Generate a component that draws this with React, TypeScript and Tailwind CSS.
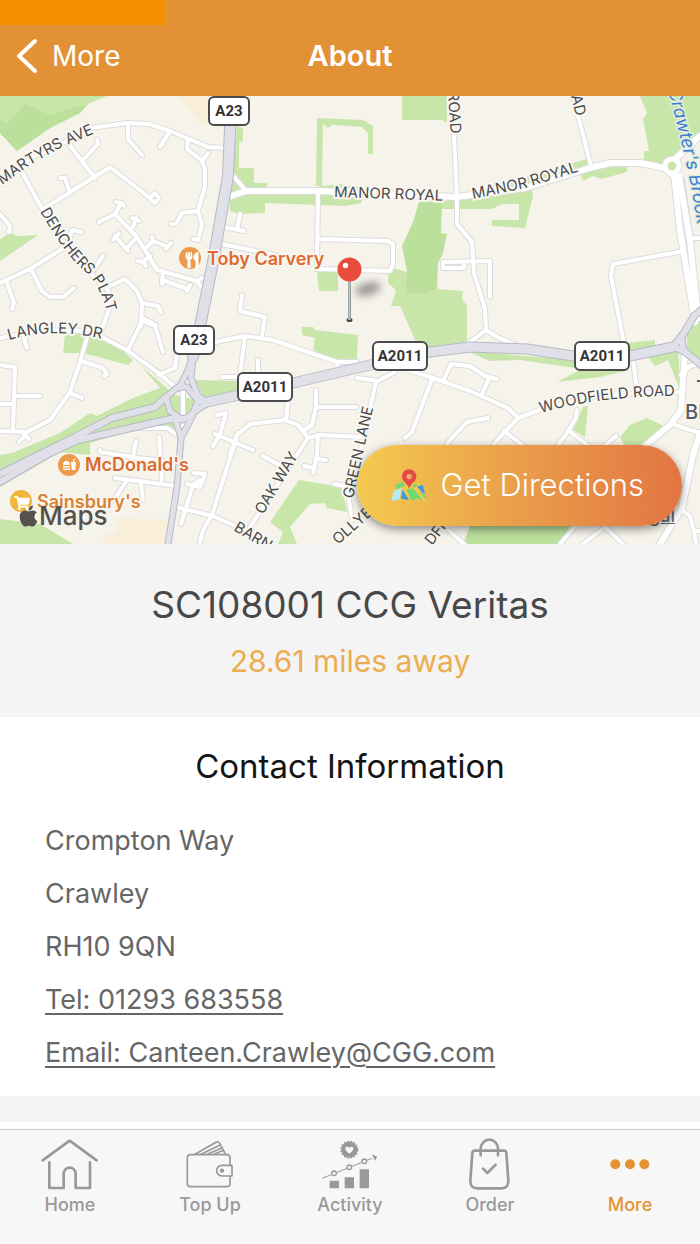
import type { ReactNode } from 'react';
import clsx from 'clsx';
import { FaApple, FaShoppingCart, FaUtensils } from 'react-icons/fa';

const GREEN_AREAS = [
  'M0 96 L107 96 L88 104 L80 113 L50 128 L17 151 L0 133Z',
  'M0 261 L38 235 L17 236 L10 232 L0 240Z',
  'M237 126 L243 128 L243 141 L239 143 L239 168 L254 168 L254 183 L267 183 L267 191 L317 190 L320 186 L340 184 L361 187 L363 198 L361 203 L346 206 L265 203 L265 213 L240 214 L230 211 L230 176Z',
  'M317 118 L363 120 L373 126 L373 154 L368 154 L368 133 L362 127 L332 125 L328 128 L323 124 L322 186 L316 186Z',
  'M402 96H447V123L442 120H402Z',
  'M388 283 L388 274 L393 268 L407 272 L405 294 L437 289 L463 291 L462 299 L467 306 V342 L428 347 L416 342 L400 306 L391 306 L396 290Z',
  'M317 272H338V291H319Z',
  'M640 96H700V135L668 163L644 163V151L649 151L643 119L647 113Z',
  'M442 201 L472 198 L512 181 L587 159 L590 163 L627 164 L627 172 L602 179 L593 176 L583 181 L580 174 L532 189 L533 196 L525 228 L492 226 L492 220 L519 220 L519 204 L502 204 L492 209 L442 209Z',
  'M65 335 L80 333 L110 340 L133 360 L128 365 L83 353 L63 353Z',
  'M0 455 L12 453 L60 433 L90 413 L97 416 L133 398 L160 388 L140 365 L175 395 L197 400 L180 430 L177 428 L133 430 L90 443 L90 455 L60 452 L0 487Z',
  'M195 380 L240 381 V391 L205 400Z',
  'M0 519 L40 524 L73 544 H0Z',
  'M302 327 L313 327 L315 330 L358 335 L357 360 L340 362 L313 350 L315 338 L302 335Z',
  'M299 480 L342 487 L347 512 L327 508 L325 503 L310 504 L290 527 L297 544 H278 L283 532 L270 522Z',
  'M467 351 L575 360 V368 L520 360 L490 361Z',
  'M557 382 L578 371 L632 358 L626 371 L600 377Z',
  'M628 343 L655 340 L655 346 L630 354Z',
  'M647 356 L678 350 L681 392 L668 360 L655 366Z',
  'M583 407 L588 406 L585 437 L573 430Z',
  'M620 437 L630 425 L647 418 L668 428 L648 447 H625Z',
  'M686 332 L700 314 V362 L688 350Z',
];

const DARK_GREEN_AREAS = [
  'M419 202 L442 201 L441 233 L447 234 L443 253 L438 263 L437 289 L425 293 L405 294 L407 272 L402 246 L413 222Z',
  'M0 133 V120 L7 124 L25 104 L50 115 L78 106 L88 104 L80 113 L50 128 L17 151Z',
  'M470 526 H570 L560 544 H463Z',
];

const BEIGE_AREAS = ['M117 518 L167 520 L165 544 H103 L106 533 H117Z', 'M178 96H210V126L200 122Z'];

const STREETS = [
  // north-west estate
  'M0 184 L30 158 L60 145 L90 128 L128 123 L148 124 L170 131 L208 147 L226 148',
  'M128 123 V139 L142 155 M170 131 L160 147',
  'M188 139 L187 149 L202 161 L205 169 V186 L198 211 L202 224 L198 240 L193 239 M202 161 L208 153 M198 211 L182 213 L176 224 L171 224',
  'M68 143 L95 178 M83 160 L98 144 L97 140 M45 208 L110 167 L150 198 M70 193 L65 178 L60 178',
  'M150 198 L155 203 L159 198 L155 193 L150 198',
  'M23 174 L41 207 L67 248 L93 276 L108 290 L110 306 L103 326',
  'M0 214 L10 226 L9 232 M0 283 L30 269 L67 246 L72 230 L81 232',
  'M32 271 L42 291 L50 297 H63 L74 288 M7 283 L14 303 L12 309 M93 271 L103 256',
  'M99 222 L115 214 L121 203 L116 202 M121 203 L124 206 M115 214 L137 237 L157 270 L197 281 L202 288',
  'M133 227 L136 218 M132 218 L139 221 M137 237 L126 249 M128 251 L115 236 M113 240 L119 233',
  'M145 249 L153 241 L152 237 M153 241 L168 247 M166 249 L171 243 M150 256 L143 262 L146 266 M143 262 L138 261',
  'M163 271 L162 284 M162 280 L188 289 M190 285 L187 291 M197 281 L202 278',
  'M110 286 L125 279 L137 291 L142 303 L141 326 M142 303 L158 306 L161 312 M142 318 L156 325',
  'M222 244 L275 255 M224 227 L244 231 M240 214 L237 230',
  // industrial estate
  'M230 172 L246 191 M318 193 L317 269 L390 271 L393 264 V244 L388 241 L318 239',
  'M452 96 L457 197 V224 L472 242 L474 273 L485 309 L486 330 L478 336 L463 347 M486 330 L497 337 L520 347',
  'M573 96 L591 166 M443 262 L490 261 V297 M443 262 V268 H464 V262',
  'M684 251 L613 264 L611 276 L624 344 M694 238 H700',
  // Langley
  'M0 338 L40 330 L90 331 L127 350 L160 374 L175 387 M88 334 L80 362 L70 392 L50 420 L27 432 L0 431',
  'M81 361 L103 368 L107 374 L104 376 M70 393 L82 398 M0 365 L15 367 L13 431 M14 396 H40 M0 404 H14',
  'M22 432 L29 439 M19 442 L24 437 M24 338 L27 348 M128 350 L142 321 L155 326 L163 352 M103 326 L100 335',
  'M158 375 L175 368 L178 345',
  'M215 342 L245 336 L273 340 L337 362 L357 362 M262 336 L265 317 L240 311 L242 295 M245 336 L240 375',
  'M258 360 V372 M222 377 H240 M338 362 L336 372',
  'M140 428 H167 L180 437 M183 388 V430',
  'M136 441 L133 457 L100 452 V450 M159 437 L162 480 M115 478 L177 486 M127 480 L114 500 M141 483 L143 500 M130 457 L162 461',
  // south
  'M176 507 L213 516 L240 528 L275 548 M200 480 L193 485 L181 524 M194 473 L205 474 L200 487 L187 484',
  'M238 433 L212 515 L203 530 L200 542 M215 434 L253 450 M217 415 L226 413 L220 434 L213 446',
  'M230 455 L237 435 L250 424 L285 420 L298 425 L308 438 L250 527 M288 400 L286 420 M316 390 V407 L312 425 L304 430 M316 407 H356',
  'M308 438 L320 435 L362 437 M318 435 L317 455 L313 473 M304 466 L314 468 M317 459 L326 460 M263 456 L283 467',
  'M395 372 L376 382 L363 440 L349 500 L352 520 M357 378 L378 381 M334 484 L345 486',
  'M410 371 L430 377 L470 391 L508 408 L518 418 L500 437 L485 455 M432 379 L412 432 L405 438',
  'M443 381 L451 364 L470 366 L485 376 L497 379 M489 378 L482 394 M488 418 L467 422 L450 440 L440 455',
  'M518 418 L545 408 L600 395 L680 392 M577 410 L576 418 L565 436 L550 455 M568 430 L590 447 M504 431 L525 447 M616 436 L600 450',
  'M633 358 L637 392 M675 425 L700 433 M682 510 L690 516 L694 531 H700 M694 531 L696 544 M681 375 L690 366 L700 364',
  'M583 544 L605 527 L623 544 M560 544 L577 524 M440 522 L465 545',
];

const AVENUES = [
  'M228 197 L246 191 H320 L400 195 L457 197 L525 188 L593 167 L610 163 H640 L665 168 L676 178',
  'M670 164 L700 136',
  'M685 352 L681 410 L670 425 L640 450 M700 433 L693 455 L682 508 L660 544',
];

const MAJOR_ROADS = [
  { d: 'M230 96 L230 128 L228 176 L213 262 L200 326 L193 357', width: 10 },
  { d: 'M192 358 L188 370 L179 388 M193 358 L191 378 L198 396 L207 402', width: 5 },
  { d: 'M178 387 L187 387 L198 401 L193 413 L183 420 L170 411 L166 397Z', width: 5 },
  { d: 'M166 397 L155 407 L112 418 L75 437 L0 474', width: 6 },
  { d: 'M184 419 L170 419 L78 440 L50 453 L0 482', width: 6 },
  { d: 'M193 415 L181 438 L177 487 L168 544 M175 418 L181 438', width: 5 },
  { d: 'M207 402 L230 397 L293 383 L370 365 L430 352 L470 347 L527 349 L573 356 L630 356 L673 347', width: 9 },
  { d: 'M198 401 L207 402 M194 412 L209 402', width: 5 },
  { d: 'M673 347 L684 333 L694 316 L704 308 M673 347 L684 351 L704 367 M681 338 L684 351', width: 6 },
];

const BADGES = [
  { x: 208, y: 96, w: 42, label: 'A23' },
  { x: 173, y: 325, w: 42, label: 'A23' },
  { x: 237, y: 372, w: 56, label: 'A2011' },
  { x: 372, y: 341, w: 56, label: 'A2011' },
  { x: 574, y: 341, w: 56, label: 'A2011' },
];

const STREET_LABELS = [
  { id: 'martyrs', d: 'M2 185 L30 165 L62 147 L100 131', label: 'MARTYRS AVE' },
  { id: 'denchers', d: 'M40 211 Q62 250 82 269 Q104 285 110 330', label: 'DENCHERS PLAT' },
  { id: 'langley', d: 'M9 340 Q55 326 110 341', label: 'LANGLEY DR' },
  { id: 'manor1', d: 'M334 197 L450 201', label: 'MANOR ROYAL' },
  { id: 'manor2', d: 'M473 199 L525 188 L590 168', label: 'MANOR ROYAL' },
  { id: 'road', d: 'M448 92 L451 140', label: 'ROAD' },
  { id: 'ad', d: 'M571 96 L579 130', label: 'AD' },
  { id: 'oak', d: 'M263 515 L303 448', label: 'OAK WAY' },
  { id: 'green', d: 'M353 499 L376 395', label: 'GREEN LANE' },
  { id: 'woodfield', d: 'M541 413 Q605 394 700 396', label: 'WOODFIELD ROAD' },
  { id: 'barn', d: 'M233 530 L285 561', label: 'BARN' },
  { id: 'olly', d: 'M338 545 L382 506', label: 'OLLYBU' },
  { id: 'dfi', d: 'M432 546 L460 510', label: 'DFIE' },
];

function MapView() {
  return (
    <svg viewBox="0 96 700 448" className="block w-full h-auto bg-[#f6f3eb]" role="img" aria-label="Map of Crawley">
      {BEIGE_AREAS.map((d) => (
        <path key={d} d={d} fill="#f9eed8" />
      ))}
      {GREEN_AREAS.map((d) => (
        <path key={d} d={d} fill="#c9e6aa" />
      ))}
      {DARK_GREEN_AREAS.map((d) => (
        <path key={d} d={d} fill="#bbe09b" />
      ))}

      {/* Road casings go under every fill so that junctions stay open */}
      <g fill="none" strokeLinecap="round" strokeLinejoin="round">
        <g stroke="#dcdcde">
          {STREETS.map((d) => (
            <path key={d} d={d} strokeWidth={6} />
          ))}
          {AVENUES.map((d) => (
            <path key={d} d={d} strokeWidth={8} />
          ))}
          <path d="M674 174 L680 230 L695 322 M681 180 L690 240 L698 318" strokeWidth={8} />
          <circle cx="672" cy="166" r="7" strokeWidth={7} />
        </g>
        <g stroke="#ffffff">
          {STREETS.map((d) => (
            <path key={d} d={d} strokeWidth={4} />
          ))}
          {AVENUES.map((d) => (
            <path key={d} d={d} strokeWidth={6} />
          ))}
          <path d="M674 174 L680 230 L695 322 M679 176 L690 240 L698 318" strokeWidth={6} />
          <circle cx="672" cy="166" r="7" strokeWidth={5} fill="#c9e6aa" />
        </g>
        <g stroke="#b6b8c6">
          {MAJOR_ROADS.map((road) => (
            <path key={road.d} d={road.d} strokeWidth={road.width + 2} />
          ))}
        </g>
        <g stroke="#e0e1e8">
          {MAJOR_ROADS.map((road) => (
            <path key={road.d} d={road.d} strokeWidth={road.width} />
          ))}
        </g>
      </g>

      {/* Street names */}
      <g
        className="font-[Inter,sans-serif]"
        fontSize="15"
        fill="#4a4a4a"
        stroke="#f9f7f2"
        strokeWidth="4"
        strokeLinejoin="round"
        paintOrder="stroke"
      >
        {STREET_LABELS.map((street) => (
          <g key={street.id}>
            <path id={street.id} d={street.d} fill="none" stroke="none" />
            <text>
              <textPath href={`#${street.id}`}>{street.label}</textPath>
            </text>
          </g>
        ))}
        <path id="brook" d="M668 90 L676 121 L685 158 L691 186 L699 235" fill="none" stroke="none" />
        <text fill="#3d7fd0" stroke="#e3eedb" strokeWidth="3" fontStyle="italic" fontSize="18">
          <textPath href="#brook">Crawter's Brook</textPath>
        </text>
        <text x="685" y="419" fontSize="20" fontWeight="500" fill="#5b5b5f">
          Bl
        </text>
        <path d="M697 381 H700" stroke="#5b5b5f" strokeWidth="2" />
      </g>

      {/* Road numbers */}
      {BADGES.map((badge) => (
        <g key={`${badge.x}-${badge.y}`}>
          <rect x={badge.x + 1} y={badge.y + 1} width={badge.w - 2} height="28" rx="5" fill="#fff" stroke="#4b4b4d" strokeWidth="2" />
          <text
            x={badge.x + badge.w / 2}
            y={badge.y + 20}
            textAnchor="middle"
            fontSize="15"
            fontWeight="700"
            fill="#333335"
            className="font-[Roboto,sans-serif]"
          >
            {badge.label}
          </text>
        </g>
      ))}

      {/* Places */}
      <g
        className="font-[Inter,sans-serif]"
        fontSize="18"
        fontWeight="600"
        stroke="#faf7f1"
        strokeWidth="3"
        strokeLinejoin="round"
        paintOrder="stroke"
      >
        <text x="207" y="265" fill="#dd6b31">Toby Carvery</text>
        <text x="85" y="471" fill="#dd6b31">McDonald's</text>
        <text x="37" y="508" fill="#d98434">Sainsbury's</text>
      </g>
      <circle cx="190" cy="258" r="11" fill="#ee9a4d" />
      <FaUtensils x="184" y="252" width="12" height="12" color="#fff" />
      <circle cx="69" cy="465" r="11" fill="#ee9a4d" />
      <path
        d="M63 465 Q63 461 66.500 461 Q70 461 70 465Z M63 466 H70 V467.500 H63Z M63 468.500 H70 V470 H64 Q63 470 63 468.500Z M71 462 H76 L75.300 470 H71.700Z M73 462 L73.500 459 L75.500 458.500 L75.600 459.500 L74.400 460 L74 462Z"
        fill="#fff"
      />
      <circle cx="21" cy="501" r="11" fill="#f2b63c" />
      <FaShoppingCart x="14" y="495" width="13" height="13" color="#fff" />

      {/* Pin */}
      <defs>
        <filter id="pin-shadow" x="-50%" y="-80%" width="200%" height="260%">
          <feGaussianBlur stdDeviation="4" />
        </filter>
        <linearGradient id="pin-stem" x1="0" x2="1" y1="0" y2="0">
          <stop offset="0" stopColor="#8f9799" />
          <stop offset="0.5" stopColor="#c3c9ca" />
          <stop offset="1" stopColor="#7b8385" />
        </linearGradient>
      </defs>
      <ellipse cx="368" cy="289" rx="13" ry="6" fill="#000" opacity="0.4" filter="url(#pin-shadow)" transform="rotate(-15 368 289)" />
      <ellipse cx="349.5" cy="320" rx="3" ry="2" fill="#444" />
      <rect x="348" y="278" width="3" height="42" fill="url(#pin-stem)" />
      <circle cx="349.5" cy="269.5" r="12" fill="#e94b3c" />
      <circle cx="345.5" cy="265.5" r="2.7" fill="#fff" />
    </svg>
  );
}

function DirectionsIcon() {
  return (
    <svg viewBox="125 105 115 106" className="w-[38px] h-[35px]" aria-hidden="true">
      <path d="M138 160 L165 147 L210 150 L221 158 L237 206 L205 199 L185 206 L162 198 L129 206Z" fill="#f6c74b" />
      <path d="M142 156 L163 146 L172 160 L140 170Z" fill="#77d672" />
      <path d="M137 174 L159 166 L154 200 L129 206Z" fill="#b4e9f8" />
      <path d="M163 170 L183 203 L158 197Z" fill="#3f97e6" />
      <path d="M190 160 L203 151 L208 156 L203 164Z" fill="#77d672" />
      <path d="M174 169 L206 165 L222 203 L205 197 L190 204Z" fill="#6fd870" />
      <path d="M194 166 L206 162 L232 204 L226 203Z" fill="#f6c74b" />
      <path d="M207 162 L224 156 L231 182 L222 180Z" fill="#3f97e6" />
      <path d="M216 179 L232 186 L237 206Z" fill="#77d672" />
      <path d="M183 167 C178 152 161 146 161 130 A22 21 0 0 1 205 130 C205 146 188 152 183 167Z" fill="#e34b4b" />
      <circle cx="183" cy="131" r="8" fill="#f3b25a" />
    </svg>
  );
}

const TABS: { label: string; viewBox: string; active?: boolean; icon: ReactNode }[] = [
  {
    label: 'Home',
    viewBox: '120 140 180 165',
    icon: (
      <g fill="none" stroke="currentColor" strokeWidth="8" strokeLinecap="round" strokeLinejoin="round">
        <path d="M128 210 L209 151 L290 210" />
        <path d="M148 216 V293 H191 V250 A18 18 0 0 1 227 250 V293 H270 V216" />
      </g>
    ),
  },
  {
    label: 'Top Up',
    viewBox: '540 140 180 165',
    icon: (
      <g fill="none" stroke="currentColor" strokeWidth="5" strokeLinejoin="round" strokeLinecap="round">
        <path d="M690 224 V202 Q690 193 681 193 H571 Q562 193 562 202 V280 Q562 289 571 289 H681 Q690 289 690 280 V258" />
        <path d="M696 225 V257 H666 A16 16 0 0 1 666 225Z" />
        <path d="M585 192 L648 156 Q655 152 659 159 L677 192 M603 192 L662 163 M622 192 L667 172 M641 192 L671 180" />
        <circle cx="666" cy="241" r="4" fill="currentColor" />
      </g>
    ),
  },
  {
    label: 'Activity',
    viewBox: '120 140 180 165',
    icon: (
      <>
        <circle cx="208" cy="178" r="24" fill="currentColor" />
        <circle cx="208" cy="178" r="25" fill="none" stroke="currentColor" strokeWidth="4" strokeDasharray="6 4" />
        <path d="M208 190 C202 184 196 181 196 175 C196 168 205 167 208 173 C211 167 220 168 220 175 C220 181 214 184 208 190Z" fill="#f7f7f7" />
        <path d="M126 264 L276 204" stroke="currentColor" strokeWidth="3" />
        <path d="M276 192 L292 199 L285 211Z" fill="currentColor" />
        <g fill="#f7f7f7" stroke="currentColor" strokeWidth="4">
          <circle cx="162" cy="249" r="7" />
          <circle cx="208" cy="231" r="7" />
          <circle cx="253" cy="213" r="7" />
        </g>
        <path d="M149 271 H177 V294 H149Z M194 261 H222 V294 H194Z M239 237 H267 V294 H239Z" fill="currentColor" />
      </>
    ),
  },
  {
    label: 'Order',
    viewBox: '540 140 180 165',
    icon: (
      <g fill="none" stroke="currentColor" strokeWidth="8" strokeLinecap="round" strokeLinejoin="round">
        <path d="M585 181 H672 Q678 181 679 187 L685 270 Q686 294 664 294 H592 Q570 294 571 270 L577 187 Q578 181 585 181Z" />
        <path d="M602 195 V175 A26 27 0 0 1 654 175 V195" />
        <path d="M609 235 L622 248 L647 223" />
      </g>
    ),
  },
  {
    label: 'More',
    viewBox: '960 140 180 165',
    active: true,
    icon: (
      <g fill="currentColor">
        <circle cx="1006" cy="222" r="15" />
        <circle cx="1050" cy="222" r="15" />
        <circle cx="1093" cy="222" r="15" />
      </g>
    ),
  },
];

function TabBar() {
  return (
    <nav className="grid grid-cols-5 pt-[7px] pb-[26px] border-t border-[#cbcbcb] bg-[#f7f7f7]">
      {TABS.map((tab) => (
        <button
          key={tab.label}
          type="button"
          aria-current={tab.active ? 'page' : undefined}
          className={clsx(
            'flex flex-col items-center text-[18px] leading-[26px] font-medium',
            tab.active ? 'text-[#e59232]' : 'text-[#999999]',
          )}
        >
          <svg viewBox={tab.viewBox} className="w-[60px] h-[55px]" aria-hidden="true">
            {tab.icon}
          </svg>
          {tab.label}
        </button>
      ))}
    </nav>
  );
}

export default function App() {
  return (
    <div className="flex flex-col min-h-screen bg-white font-[Inter,sans-serif]">
      {/* Header */}
      <header className="bg-[#e39135] text-white">
        <div className="w-[165px] h-[25px] bg-[#f58f00]" />
        <div className="grid grid-cols-3 items-start h-[71px] pt-[11px]">
          <button type="button" className="flex items-center gap-[14px] pl-4 text-[28px] leading-10">
            <svg viewBox="0 0 22 36" className="w-[22px] h-9" aria-hidden="true">
              <path d="M19 3 L3 18 L19 33" fill="none" stroke="currentColor" strokeWidth="4" strokeLinecap="round" strokeLinejoin="round" />
            </svg>
            More
          </button>
          <h1 className="text-center text-[29px] leading-10 font-semibold">About</h1>
        </div>
      </header>

      {/* Map */}
      <section className="relative overflow-hidden">
        <MapView />
        <div className="absolute left-[18px] bottom-3 flex items-center text-[26px] leading-8 font-medium text-[#55524e]">
          <FaApple className="w-[21px] h-6" />
          Maps
        </div>
        <a href="#legal" className="absolute right-[25px] bottom-4 text-[18px] leading-6 font-medium text-[#68666a] underline">
          Legal
        </a>
        <button
          type="button"
          className="absolute right-[18px] bottom-[18px] flex items-center gap-3 h-[81px] pl-[33px] pr-[38px] rounded-full bg-linear-to-r from-[#f4ca50] via-[#e99d4a] to-[#e27543] shadow-[0_3px_10px_rgba(0,0,0,0.45)] text-[31px] font-light text-white whitespace-nowrap"
        >
          <DirectionsIcon />
          Get Directions
        </button>
      </section>

      {/* Venue */}
      <section className="pt-[35px] pb-[34px] bg-[#f4f4f4] text-center">
        <h2 className="text-[37px] leading-[52px] text-[#484848]">SC108001 CCG Veritas</h2>
        <p className="mt-2 text-[30px] leading-[44px] text-[#ecac50]">28.61 miles away</p>
      </section>

      {/* Contact details */}
      <section className="pt-[27px] pb-4">
        <h2 className="text-center text-[33px] leading-[44px] text-[#141414]">Contact Information</h2>
        <address className="mt-[26px] mb-px px-[45px] flex flex-col items-start text-[27px] leading-[53px] not-italic text-[#666666]">
          <span>Crompton Way</span>
          <span>Crawley</span>
          <span>RH10 9QN</span>
          <a href="tel:01293683558" className="underline underline-offset-4 decoration-2">
            Tel: 01293 683558
          </a>
          <a href="mailto:Canteen.Crawley@CGG.com" className="underline underline-offset-4 decoration-2">
            Email: Canteen.Crawley@CGG.com
          </a>
        </address>
      </section>

      <div className="h-[26px] mb-[7px] bg-[#f4f4f4]" />
      <div className="mt-auto">
        <TabBar />
      </div>
    </div>
  );
}
